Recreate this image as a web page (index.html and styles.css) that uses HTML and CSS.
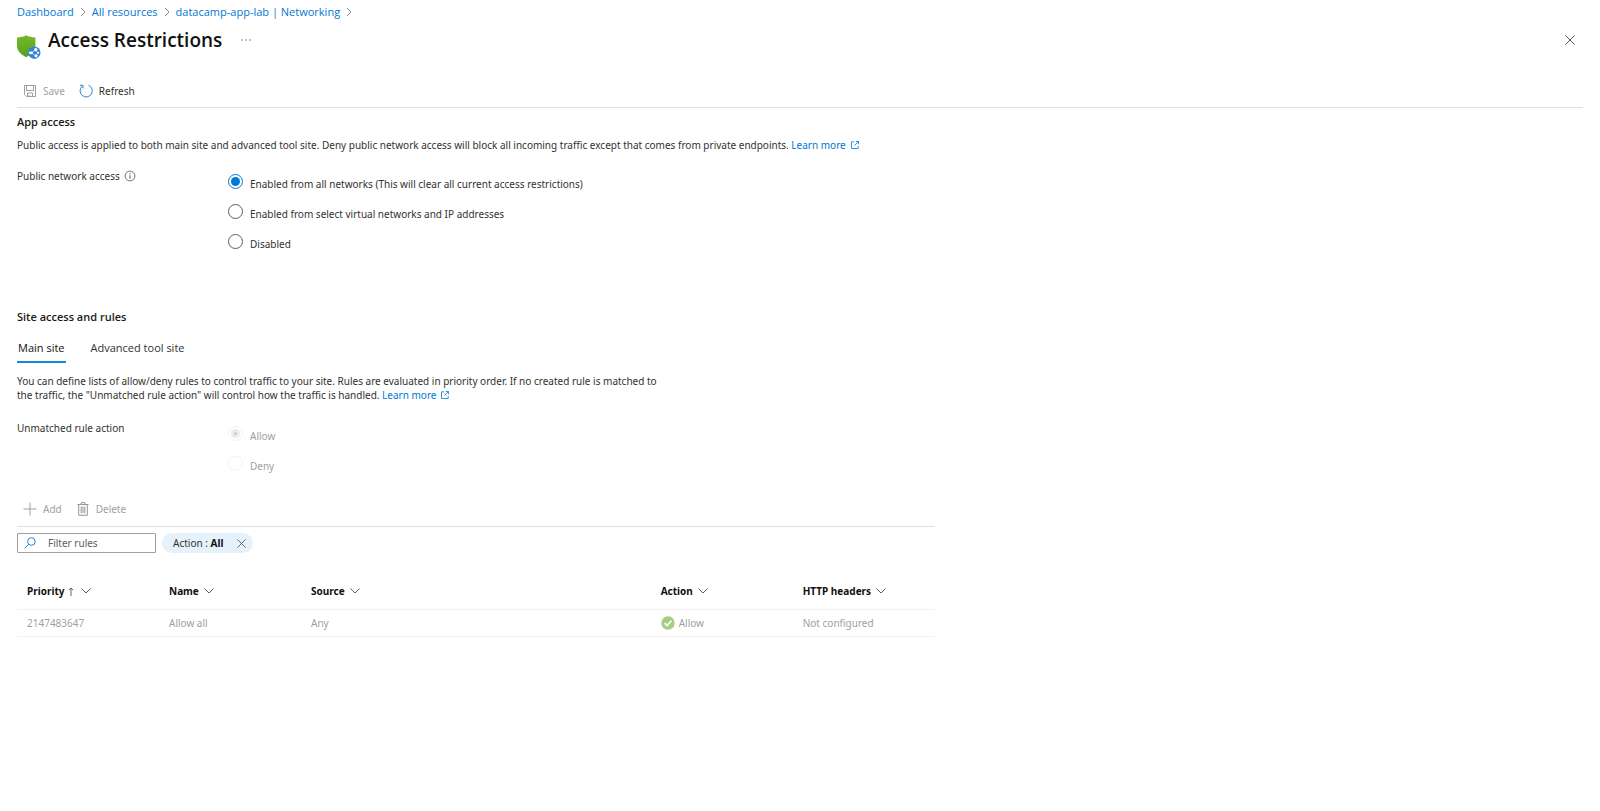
FILE: index.html
```html
<!DOCTYPE html>
<html lang="en">
<head>
<meta charset="utf-8">
<title>Access Restrictions</title>
<link rel="stylesheet" href="styles.css">
</head>
<body>
<svg class="defs" aria-hidden="true">
  <symbol id="chevron-right" viewBox="0 0 6 10"><path d="M1 1l4 4-4 4" fill="none" stroke="currentColor"/></symbol>
  <symbol id="chevron-down" viewBox="0 0 10 6"><path d="M.5 .5L5 5l4.500-4.500" fill="none" stroke="currentColor"/></symbol>
  <symbol id="cross" viewBox="0 0 10 10"><path d="M.5 .5l9 9M9.500 .5l-9 9" fill="none" stroke="currentColor"/></symbol>
  <symbol id="external" viewBox="0 0 8 8"><path d="M3 .8H.5v6.700h6.700V5M4.700 .5h2.800v2.800M7.300 .7L3.500 4.500" fill="none" stroke="currentColor" stroke-width=".8"/></symbol>
</svg>
<nav class="breadcrumb" aria-label="Breadcrumb">
  <a href="#">Dashboard</a><svg class="crumb-sep"><use href="#chevron-right"/></svg>
  <a href="#">All resources</a><svg class="crumb-sep"><use href="#chevron-right"/></svg>
  <a href="#">datacamp-app-lab | Networking</a><svg class="crumb-sep"><use href="#chevron-right"/></svg>
</nav>
<header class="page-header">
  <svg class="shield" viewBox="0 0 24 24" aria-hidden="true">
    <defs><linearGradient id="green" x1="0" y1="0" x2="0" y2="1"><stop offset="0" stop-color="#76b82a"/><stop offset="1" stop-color="#55a022"/></linearGradient></defs>
    <path fill="url(#green)" d="M0 2.500C4 2.300 6.500 1.800 9.200 .3c2.700 1.500 5.200 2 9.200 2.200v8.300c0 5.700-5 9.300-9.200 11.500C5 20.100 0 16.500 0 10.800z"/>
    <circle cx="17.300" cy="17.700" r="6.200" fill="#3583d9"/>
    <path d="M14 17.800l4.500-3M14 17.800l5 3M18.500 14.800l2.500 3L19 20.800" stroke="#b5d8fa" stroke-width=".8" fill="none"/>
    <g fill="#fff"><ellipse cx="14" cy="17.800" rx="2.200" ry="1.400"/><circle cx="18.700" cy="14.700" r="1.700"/><circle cx="19" cy="20.800" r="1.500"/><circle cx="21.200" cy="17.800" r="1"/></g>
  </svg>
  <h1>Access Restrictions</h1>
  <button class="more" aria-label="More options"><svg viewBox="0 0 10 2"><g fill="#555"><circle cx="1" cy="1" r=".7"/><circle cx="5" cy="1" r=".7"/><circle cx="9" cy="1" r=".7"/></g></svg></button>
  <button class="close" aria-label="Close"><svg><use href="#cross"/></svg></button>
</header>
<div class="toolbar main-toolbar">
  <button disabled>
    <svg class="tool-icon" viewBox="0 0 14 14"><path d="M1.500 1.500h11v11h-9l-2-2zM3.500 1.500v5h7v-5M4.500 12.500V9h5v3.500M6 12.500v-1.500" fill="none" stroke="#a19f9d"/></svg>Save
  </button>
  <button>
    <svg class="tool-icon" viewBox="0 0 14 14"><path d="M9.500 1.200A6.100 6.100 0 1 1 3.200 2.200M1 1.300h3v3" fill="none" stroke="#2f80d8"/></svg>Refresh
  </button>
</div>
<main>
  <section class="app-access">
    <h2>App access</h2>
    <p class="intro">Public access is applied to both main site and advanced tool site. Deny public network access will block all incoming traffic except that comes from private endpoints. <a href="#">Learn more<svg class="ext"><use href="#external"/></svg></a></p>
    <div class="field" role="radiogroup" aria-labelledby="pna">
      <span class="field-label" id="pna">Public network access
        <svg class="info" viewBox="0 0 12 12"><circle cx="6" cy="6" r="4.900" fill="none" stroke="#555" stroke-width=".8"/><path d="M6 5.200v3.500M6 3.200v1" stroke="#555"/></svg>
      </span>
      <div class="options">
        <label><input type="radio" name="access" checked><span>Enabled from all networks (This will clear all current access restrictions)</span></label>
        <label><input type="radio" name="access"><span>Enabled from select virtual networks and IP addresses</span></label>
        <label><input type="radio" name="access"><span>Disabled</span></label>
      </div>
    </div>
  </section>
  <section class="rules">
    <h2>Site access and rules</h2>
    <div class="tabs" role="tablist">
      <button role="tab" aria-selected="true">Main site</button>
      <button role="tab" aria-selected="false">Advanced tool site</button>
    </div>
    <p class="description">You can define lists of allow/deny rules to control traffic to your site. Rules are evaluated in priority order. If no created rule is matched to the traffic, the "Unmatched rule action" will control how the traffic is handled. <a href="#">Learn more<svg class="ext"><use href="#external"/></svg></a></p>
    <div class="field" role="radiogroup" aria-labelledby="ura">
      <span class="field-label" id="ura">Unmatched rule action</span>
      <div class="options">
        <label><input type="radio" name="unmatched" checked disabled><span>Allow</span></label>
        <label><input type="radio" name="unmatched" disabled><span>Deny</span></label>
      </div>
    </div>
    <div class="toolbar rule-toolbar">
      <button disabled>
        <svg class="tool-icon" viewBox="0 0 14 14"><path d="M7 .5v13M.5 7h13" fill="none" stroke="#a19f9d"/></svg>Add
      </button>
      <button disabled>
        <svg class="tool-icon" viewBox="0 0 14 14"><path d="M1.500 2.500h11M5 2.500V.7h4v1.800M2.700 2.500v10.800h8.600V2.500M5.200 4.500v6.800M7 4.500v6.800M8.800 4.500v6.800" fill="none" stroke="#979593"/></svg>Delete
      </button>
    </div>
    <div class="filters">
      <label class="search">
        <svg viewBox="0 0 12 12"><circle cx="7.400" cy="4.500" r="3.800" fill="none" stroke="#2f80d8"/><path d="M4.600 7.300L.6 11.400" stroke="#2f80d8"/></svg>
        <input type="text" placeholder="Filter rules" aria-label="Filter rules">
      </label>
      <div class="pill"><span>Action : <b>All</b></span><button aria-label="Remove filter"><svg><use href="#cross"/></svg></button></div>
    </div>
    <table>
      <thead>
        <tr>
          <th class="narrow">Priority <svg class="sort" viewBox="0 0 6 9"><path d="M3 9V1M.8 3.200L3 1l2.200 2.200" fill="none" stroke="#555" stroke-width=".9"/></svg><svg class="down"><use href="#chevron-down"/></svg></th>
          <th class="narrow">Name<svg class="down"><use href="#chevron-down"/></svg></th>
          <th>Source<svg class="down"><use href="#chevron-down"/></svg></th>
          <th class="narrow">Action<svg class="down"><use href="#chevron-down"/></svg></th>
          <th class="narrow">HTTP headers<svg class="down"><use href="#chevron-down"/></svg></th>
        </tr>
      </thead>
      <tbody>
        <tr>
          <td>2147483647</td>
          <td>Allow all</td>
          <td>Any</td>
          <td><span class="status"><svg viewBox="0 0 14 14"><circle cx="7" cy="7" r="6.700" fill="#a5cf80"/><path d="M3.800 7.200l2.300 2.400 4.300-4.900" fill="none" stroke="#fff" stroke-width="1.700"/></svg>Allow</span></td>
          <td>Not configured</td>
        </tr>
      </tbody>
    </table>
  </section>
</main>
</body>
</html>
```
FILE: styles.css
```css
*, *::before { box-sizing: border-box; }
body {
  margin: 0;
  padding: 4px 17px 24px;
  background: #fff;
  color: #323130;
  font: 10px/16px "Noto Sans", "Open Sans", sans-serif;
}
h1, h2, p { margin: 0; }
button, input { font: inherit; color: inherit; }
button { padding: 0; border: 0; background: none; }
svg { flex: none; }
a { color: #0078d4; text-decoration: none; }
p a { display: inline-block; }
h1, h2, .breadcrumb, .tabs { font-family: "Open Sans", "Noto Sans", sans-serif; }
.defs { display: none; }

.breadcrumb { display: flex; align-items: center; font-size: 11px; }
.crumb-sep { width: 6px; height: 10px; margin: 0 6px; color: #8a8886; }

.page-header { display: flex; align-items: center; height: 40px; }
.shield { width: 24px; height: 24px; margin: 13px 7px 0 0; }
h1 { color: #111; font-size: 19px; font-weight: 600; line-height: 28px; }
.more { display: flex; margin-left: 19px; }
.more svg { width: 10px; height: 2px; }
.close { display: flex; margin-left: auto; padding: 0 8px; color: #555; }
.close svg { width: 10px; height: 10px; }

.toolbar { display: flex; align-items: center; gap: 14px; padding-left: 6px; border-bottom: 1px solid #e1dfdd; }
.toolbar button { display: flex; align-items: center; gap: 6px; }
.toolbar button:disabled { color: #a19f9d; }
.tool-icon { width: 14px; height: 14px; }
.main-toolbar { height: 34px; margin-top: 14px; }

h2 { color: #1b1a19; font-size: 11px; font-weight: 600; line-height: 16px; }
.app-access { padding-top: 6px; }
.intro { margin-top: 7px; }
.ext { width: 8px; height: 8px; margin-left: 5px; }
.field { display: flex; margin-top: 15px; }
.field-label { display: flex; align-items: center; gap: 4px; width: 211px; height: 16px; }
.info { width: 12px; height: 12px; }
.options { display: grid; gap: 14px; padding-top: 6px; }
.options label { display: flex; gap: 7px; height: 16px; }
.options span { padding-top: 2px; }
.options input {
  appearance: none;
  display: grid;
  place-items: center;
  width: 15px;
  height: 15px;
  margin: 0;
  border: 1px solid #605e5c;
  border-radius: 50%;
}
.options input:checked { border-color: #0078d4; }
.options input:checked::before { content: ""; width: 9px; height: 9px; border-radius: 50%; background: #0078d4; }
.options input:disabled { border-color: #f3f2f1; }
.options input:checked:disabled::before { border: 3px solid #edebe9; background: #b5d2ec; }
.options input:disabled + span { color: #a19f9d; }

.rules { width: 58.600%; padding-top: 59px; }
.tabs { display: flex; gap: 24px; margin-top: 14px; font-size: 11px; }
.tabs button { height: 24px; padding: 0 1px 5px; border-bottom: 2px solid transparent; }
.tabs [aria-selected="true"] { border-color: #1089d8; color: #111; }
.description { max-width: 648px; margin-top: 11px; line-height: 14px; }
.rules .field { margin-top: 18px; }
.rule-toolbar { height: 35px; margin-top: 20px; }
.filters { display: flex; gap: 6px; margin-top: 6px; }
.search { display: flex; align-items: center; gap: 12px; width: 139px; height: 20px; padding: 0 6px; border: 1px solid #a19f9d; border-radius: 1px; }
.search svg { width: 12px; height: 12px; }
.search input { width: 100%; min-width: 0; height: 16px; padding: 0; border: 0; outline: 0; background: none; }
.search input::placeholder { color: #605e5c; opacity: 1; }
.pill { display: flex; align-items: center; gap: 14px; height: 20px; padding: 0 7px 0 11px; border-radius: 10px; background: #e5f1fb; }
.pill b { color: #111; }
.pill button { display: flex; color: #605e5c; }
.pill svg { width: 9px; height: 9px; }

table { width: 100%; margin-top: 20px; border-collapse: collapse; table-layout: fixed; }
th, td { padding: 0 10px; border-bottom: 1px solid #f3f2f1; text-align: left; }
th { height: 36px; color: #111; font-weight: 700; }
td { height: 27px; color: #a19f9d; }
.narrow { width: 142px; }
.down { width: 10px; height: 6px; margin-left: 5px; color: #605e5c; vertical-align: 1px; }
.sort { width: 6px; height: 9px; margin: 0 2px 0 1px; vertical-align: -1px; }
.status { display: flex; align-items: center; gap: 4px; }
.status svg { width: 14px; height: 14px; }
```
